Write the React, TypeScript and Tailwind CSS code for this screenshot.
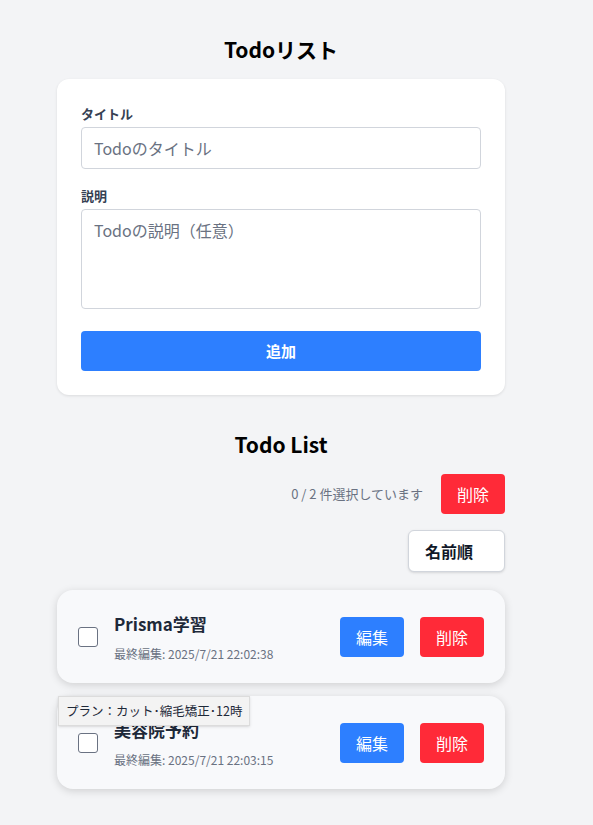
import React from 'react';

const TODOS = [
  { id: 1, title: 'Prisma学習', edited: '2025/7/21 22:02:38' },
  { id: 2, title: '美容院予約', edited: '2025/7/21 22:03:15', tip: 'プラン：カット･縮毛矯正･12時' },
];

const font = { fontFamily: '"Noto Sans CJK JP", "Noto Sans", sans-serif' };

function TodoCard({ todo }: { todo: (typeof TODOS)[number] }) {
  return (
    <div className="relative flex items-center h-[93px] rounded-2xl bg-[#f8f9fb] shadow-[0_2px_8px_rgba(0,0,0,0.15)] pl-[21px] pr-[21px]">
      <div className="w-5 h-5 rounded-[3px] border-[1.5px] border-gray-500 bg-white shrink-0" />
      <div className="ml-4 flex-1">
        <div className="text-[17px] font-bold text-gray-800 leading-6">{todo.title}</div>
        <div className="mt-[10px] text-[12px] text-gray-500 leading-4">最終編集: {todo.edited}</div>
      </div>
      <button className="w-16 h-10 rounded bg-[#2d7fff] text-white text-base">編集</button>
      <button className="ml-4 w-16 h-10 rounded bg-[#ff2a38] text-white text-base">削除</button>
      {todo.tip && (
        <div className="absolute left-px top-0 px-[7px] h-[30px] flex items-center bg-[#f3f3f3] border border-[#dcdcdc] text-[12.5px] text-gray-800 shadow-sm">
          {todo.tip}
        </div>
      )}
    </div>
  );
}

export default function App() {
  return (
    <div className="min-h-screen bg-[#f3f4f6] pt-[33px] pb-10" style={font}>
      <div className="w-[448px] ml-[57px]">
        <h1 className="text-center text-[21px] font-bold text-black leading-8">Todoリスト</h1>

        {/* 入力フォーム */}
        <div className="mt-[14px] bg-white rounded-xl shadow-[0_1px_3px_rgba(0,0,0,0.1)] p-6 pt-[25px]">
          <label className="block text-[13px] font-bold text-gray-700 leading-5">タイトル</label>
          <div className="mt-[3px] h-[42px] border border-gray-300 rounded flex items-center px-3 text-base text-gray-500">Todoのタイトル</div>
          <label className="block mt-[17px] text-[13px] font-bold text-gray-700 leading-5">説明</label>
          <div className="mt-[3px] h-[100px] border border-gray-300 rounded px-3 pt-[8px] text-base text-gray-500">Todoの説明（任意）</div>
          <button className="mt-[22px] w-full h-10 rounded bg-[#2d7fff] text-white font-bold text-[15px]">追加</button>
        </div>

        <h2 className="mt-[33px] text-center text-[21px] font-bold text-black leading-8">Todo List</h2>

        <div className="mt-[14px] flex items-center justify-end gap-[18px]">
          <span className="text-[13px] text-gray-500">0 / 2 件選択しています</span>
          <button className="w-16 h-10 rounded bg-[#ff2a38] text-white text-base">削除</button>
        </div>

        <div className="mt-4 flex justify-end">
          <div className="w-[97px] h-[42px] rounded-md bg-white border border-gray-300 shadow-sm flex items-center pl-[16px] text-base font-bold text-gray-900">名前順</div>
        </div>

        <div className="mt-[18px] flex flex-col gap-[13px]">
          {TODOS.map((t) => (
            <TodoCard key={t.id} todo={t} />
          ))}
        </div>
      </div>
    </div>
  );
}
